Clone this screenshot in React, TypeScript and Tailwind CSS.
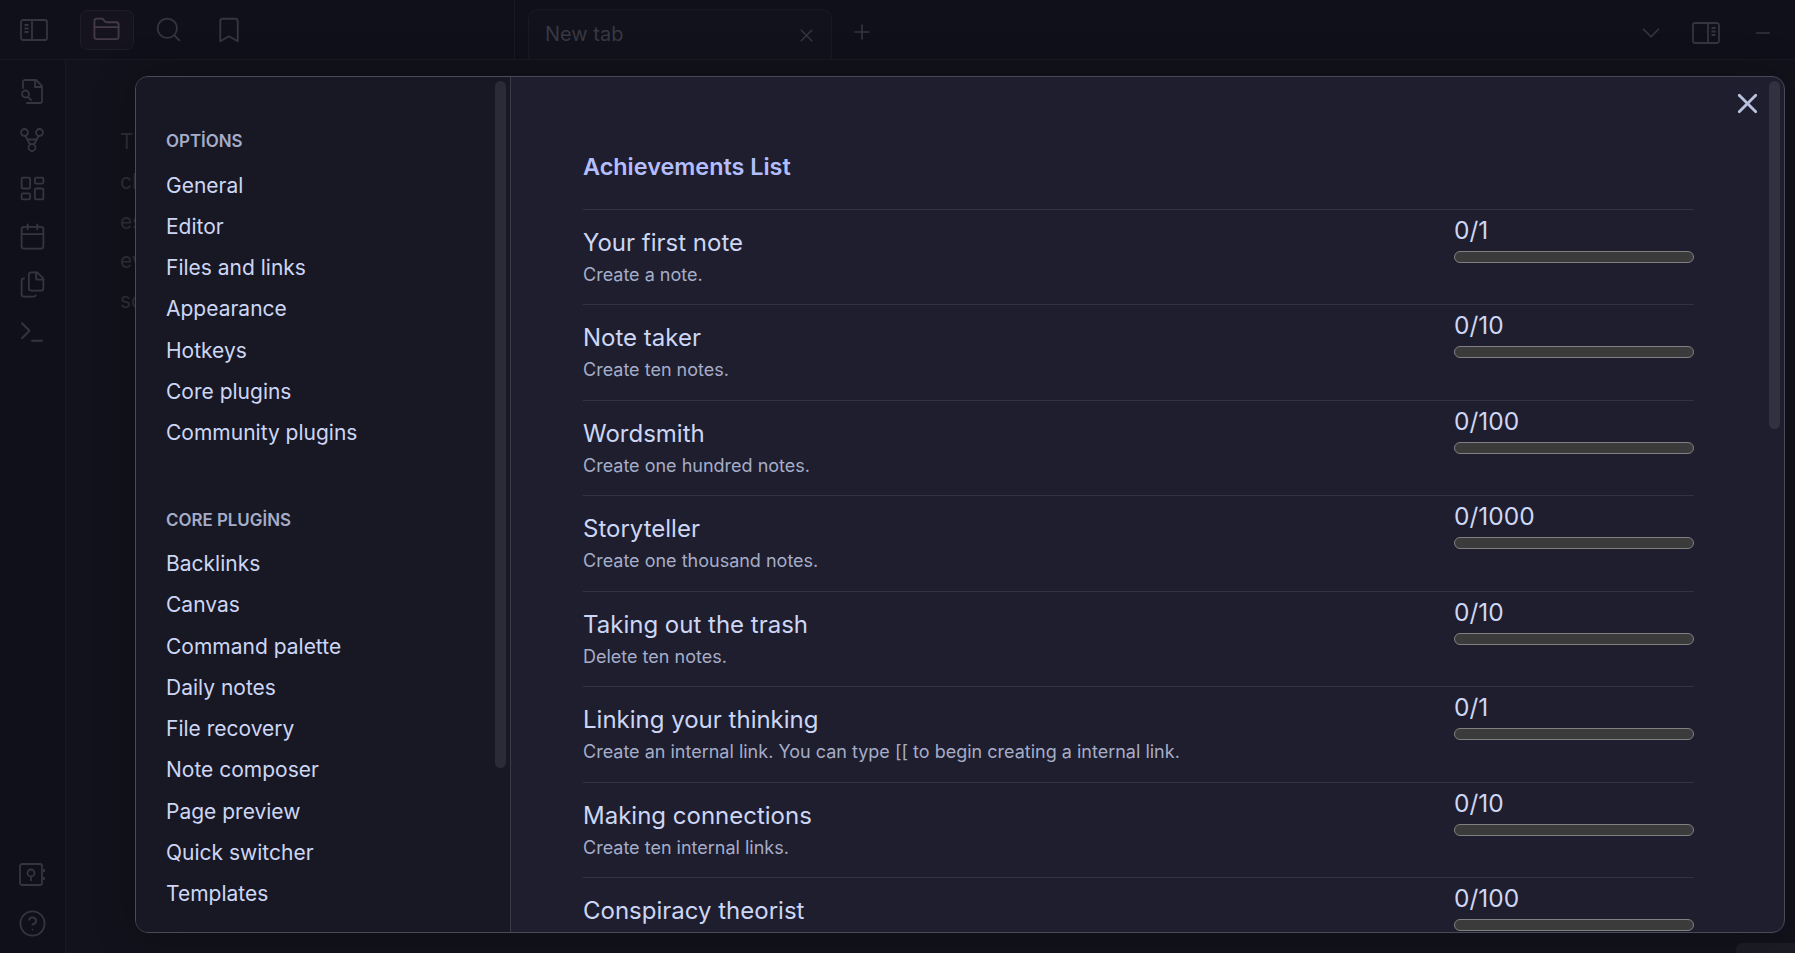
import { Bookmark, Calendar, ChevronDown, CircleHelp, Files, FolderClosed, LayoutDashboard, Minus, Plus, Search, Terminal, X } from "lucide-react";

const optionItems = ["General", "Editor", "Files and links", "Appearance", "Hotkeys", "Core plugins", "Community plugins"];
const pluginItems = ["Backlinks", "Canvas", "Command palette", "Daily notes", "File recovery", "Note composer", "Page preview", "Quick switcher", "Templates"];

const achievements = [
  { name: "Your first note", desc: "Create a note.", progress: "0/1" },
  { name: "Note taker", desc: "Create ten notes.", progress: "0/10" },
  { name: "Wordsmith", desc: "Create one hundred notes.", progress: "0/100" },
  { name: "Storyteller", desc: "Create one thousand notes.", progress: "0/1000" },
  { name: "Taking out the trash", desc: "Delete ten notes.", progress: "0/10" },
  { name: "Linking your thinking", desc: "Create an internal link. You can type [[ to begin creating a internal link.", progress: "0/1" },
  { name: "Making connections", desc: "Create ten internal links.", progress: "0/10" },
  { name: "Conspiracy theorist", desc: "Create one hundred internal links.", progress: "0/100" },
];

const dimText = ["Th", "ch", "es", "ev", "so"];

function SidebarIcon({ flip }: { flip?: boolean }) {
  return (
    <svg width="28" height="24" viewBox="0 0 28 24" fill="none" stroke="#35353f" strokeWidth="1.8" className={flip ? "-scale-x-100" : ""}>
      <rect x="1" y="2" width="26" height="20" rx="2" />
      <path d="M12 2v20M4.500 7h4M4.500 10.500h4M4.500 14h4" />
    </svg>
  );
}

function FileSearchIcon() {
  return (
    <svg width="24" height="26" viewBox="0 0 24 26" fill="none" stroke="#35353f" strokeWidth="1.8" strokeLinecap="round" strokeLinejoin="round">
      <path d="M3 9V3a2 2 0 0 1 2-2h11l6 6v15a2 2 0 0 1-2 2H7" />
      <path d="M15 1v7h7" />
      <circle cx="5.500" cy="15" r="3.500" />
      <path d="m8 18 3 3" />
    </svg>
  );
}

function GraphIcon() {
  return (
    <svg width="24" height="24" viewBox="0 0 24 24" fill="none" stroke="#35353f" strokeWidth="1.8">
      <circle cx="4.500" cy="4.500" r="3.500" />
      <circle cx="19.500" cy="4.500" r="3.500" />
      <circle cx="12" cy="19.500" r="3.500" />
      <path d="M5.500 8 10 16.500M18.500 8 14 16.500M7 11.500h10" />
    </svg>
  );
}

function VaultIcon() {
  return (
    <svg width="26" height="24" viewBox="0 0 26 24" fill="none" stroke="#35353f" strokeWidth="1.8">
      <rect x="1" y="1" width="22" height="21" rx="2" />
      <circle cx="12" cy="10" r="3.500" />
      <path d="M12 13.500V18M25 6v3M25 14v3" />
    </svg>
  );
}

function RibbonSlot({ children }: { children: React.ReactNode }) {
  return <div className="flex h-[48px] w-full items-center justify-center pr-[1px]">{children}</div>;
}

function NavGroup({ title, items }: { title: string; items: string[] }) {
  return (
    <div>
      <div className="flex h-[30px] items-center text-[16.900px] font-semibold leading-none text-[#a6adc8]">{title}</div>
      <div className="mt-[8px]">
        {items.map((item) => (
          <div key={item} className="flex h-[41.250px] items-center text-[21px] text-[#cdd6f4]">
            {item}
          </div>
        ))}
      </div>
    </div>
  );
}

function AchievementRow({ name, desc, progress }: { name: string; desc: string; progress: string }) {
  return (
    <div className="flex h-[95.450px] shrink-0 justify-between border-t border-[#33333f]">
      <div>
        <div className="mt-[16px] text-[24px] leading-[34px] text-[#cdd6f4]">{name}</div>
        <div className="text-[18px] leading-[30px] text-[#a6adc8]">{desc}</div>
      </div>
      <div className="w-[240px] shrink-0">
        <div className="mt-[3px] text-[24.500px] leading-[34px] text-[#cdd6f4]">{progress}</div>
        <div className="mt-[4px] h-[12px] w-full rounded-full border border-[#808080] bg-[#3b3b3b]" />
      </div>
    </div>
  );
}

export default function App() {
  return (
    <div className="relative flex h-[953px] w-[1795px] flex-col overflow-hidden bg-[#11111b] font-['Inter',sans-serif]">
      {/* title bar */}
      <header className="flex h-[60px] shrink-0 items-center border-b border-[#191923] bg-[#10101a]">
        <div className="flex h-full w-[515px] shrink-0 items-center border-r border-[#191923] pl-[20px]">
          <SidebarIcon />
          <div className="ml-[32px] flex h-[40px] w-[54px] items-center justify-center rounded-[7px] border border-[#1e1d28] bg-[#15141e] pr-[2px]">
            <FolderClosed size={29} strokeWidth={1.5} color="#43394a" />
          </div>
          <div className="ml-[9px] flex w-[50px] justify-center">
            <Search size={29} strokeWidth={1.5} color="#35353f" />
          </div>
          <div className="ml-[16px] flex w-[40px] justify-center">
            <Bookmark size={30} strokeWidth={1.5} color="#35353f" />
          </div>
        </div>
        <div className="flex h-full flex-1 items-end pl-[13px]">
          <div className="flex h-[50px] w-[304px] items-center justify-between rounded-t-[10px] border border-b-0 border-[#191923] bg-[#12121c] pb-[2px] pl-[16px] pr-[14px]">
            <span className="text-[20px] text-[#383842]">New tab</span>
            <X size={21} strokeWidth={1.6} color="#383842" className="mt-[4px]" />
          </div>
          <div className="mb-[10px] ml-[18px] flex h-[34px] items-center">
            <Plus size={24} strokeWidth={1.6} color="#35353f" />
          </div>
          <div className="flex-1" />
          <div className="mb-[9px] flex h-[34px] items-center gap-[20px] pr-[21px]">
            <ChevronDown size={30} strokeWidth={1.4} color="#35353f" className="mr-[6px]" />
            <SidebarIcon flip />
            <Minus size={22} strokeWidth={1.5} color="#35353f" className="ml-[12px]" />
          </div>
        </div>
      </header>

      {/* dimmed workspace */}
      <div className="flex min-h-0 flex-1">
        <aside className="flex w-[66px] shrink-0 flex-col items-center justify-between border-r border-[#191923] bg-[#10101a] pb-[6px] pt-[8px]">
          <div className="w-full">
            <RibbonSlot><FileSearchIcon /></RibbonSlot>
            <RibbonSlot><GraphIcon /></RibbonSlot>
            <RibbonSlot><LayoutDashboard size={29} strokeWidth={1.5} color="#35353f" /></RibbonSlot>
            <RibbonSlot><Calendar size={29} strokeWidth={1.5} color="#35353f" /></RibbonSlot>
            <RibbonSlot><Files size={29} strokeWidth={1.5} color="#35353f" /></RibbonSlot>
            <RibbonSlot><Terminal size={30} strokeWidth={1.5} color="#35353f" /></RibbonSlot>
          </div>
          <div className="w-full">
            <RibbonSlot><VaultIcon /></RibbonSlot>
            <RibbonSlot><CircleHelp size={29} strokeWidth={1.5} color="#35353f" /></RibbonSlot>
          </div>
        </aside>
        <main className="flex-1 bg-[#12121c] pl-[54px] pt-[62px] text-[20.800px] leading-[39.800px] text-[#2e2e39]">
          {dimText.map((t) => (
            <div key={t}>{t}</div>
          ))}
        </main>
      </div>

      {/* status bar tab peeking out at the corner */}
      <div className="absolute bottom-0 right-0 h-[10px] w-[59px] rounded-tl-[6px] bg-[#1c1c26]" />

      {/* settings modal */}
      <div className="absolute left-[135px] top-[76px] flex h-[857px] w-[1650px] overflow-hidden rounded-[13px] border border-[#494958] bg-[#1e1e2e] shadow-[0_0_40px_rgba(0,0,0,0.25)]">
        <nav className="relative w-[374.500px] shrink-0 overflow-hidden border-r border-[#3a3a48] bg-[#181825] pl-[30px] pt-[49.700px]">
          <NavGroup title="OPTİONS" items={optionItems} />
          <div className="mt-[51.800px]">
            <NavGroup title="CORE PLUGİNS" items={pluginItems} />
          </div>
          <div className="absolute left-[359px] top-[4px] h-[687px] w-[11px] rounded-full bg-[#2b2b38]" />
        </nav>

        <section className="relative flex min-w-0 flex-1 flex-col overflow-hidden pl-[72.500px] pr-[90px] pt-[69px]">
          <h2 className="mb-[21px] h-[42px] text-[23.400px] font-semibold leading-[42px] text-[#b4befe]">Achievements List</h2>
          {achievements.map((a) => (
            <AchievementRow key={a.name} {...a} />
          ))}
          <X size={33} strokeWidth={2} color="#bac2de" className="absolute right-[20px] top-[10px]" />
          <div className="absolute right-[4px] top-[4px] h-[348px] w-[11px] rounded-full bg-[#31313f]" />
        </section>
      </div>
    </div>
  );
}
